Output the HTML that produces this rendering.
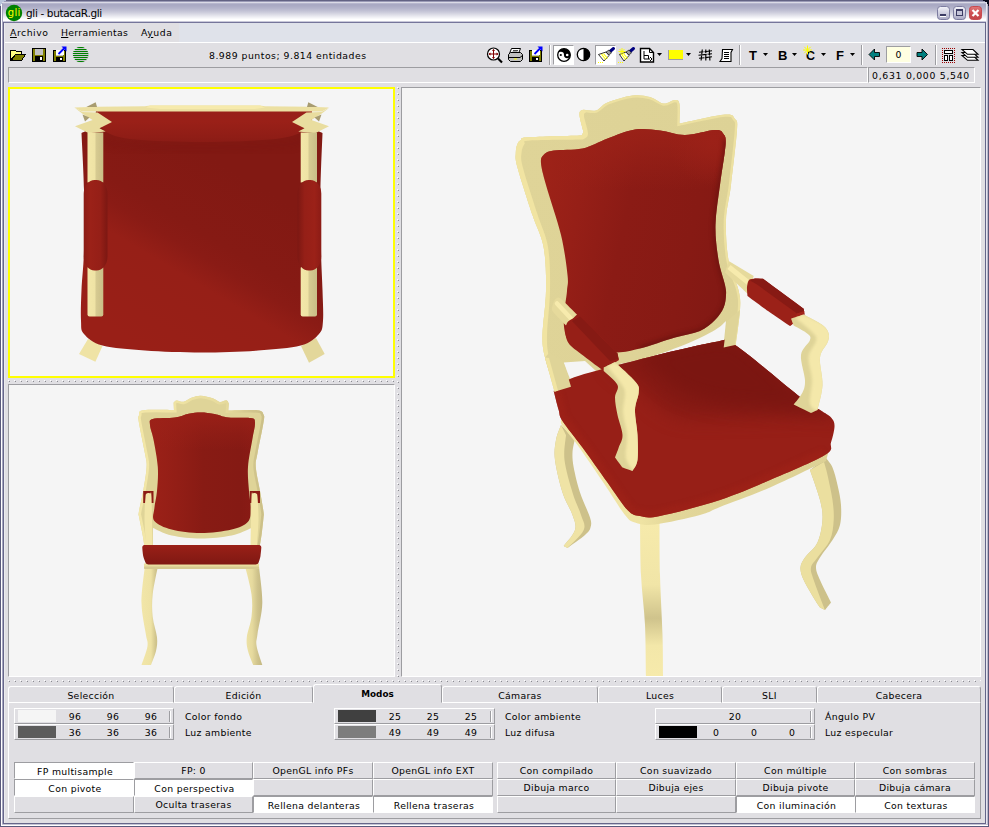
<!DOCTYPE html>
<html lang="es"><head><meta charset="utf-8"><title>gli - butacaR.gli</title>
<style>
html,body{margin:0;padding:0;background:#e0dfe3;}
body{width:989px;height:827px;overflow:hidden;}
#win{position:relative;width:989px;height:827px;background:#e0dfe3;overflow:hidden;font-family:"DejaVu Sans","Liberation Sans",sans-serif;font-size:9.3px;letter-spacing:0.32px;color:#000;}
#win div,#win span,#win svg{position:absolute;box-sizing:border-box;}
.t{white-space:nowrap;line-height:12px;height:12px;}
.c{text-align:center;}
/* frame */
#titlebar{left:0;top:0;width:989px;height:23px;background:linear-gradient(#626283 0.5px,#9a9ab6 1.5px,#dadae6 2.5px,#b6b6cd 3.5px,#a9a9c3 4.5px,#aaaac4 5.5px,#adadc6 6.5px,#b5b5cc 8.5px,#c0c0d3 10.5px,#cdcddc 12.5px,#dcdce6 14.5px,#ebebf1 16.5px,#f9f9fb 18.5px,#ffffff 19.5px,#ffffff 20.5px,#c9c9da 21.5px,#75759a 22.5px);}
.sunk{border:1px solid;border-color:#9d9da1 #fff #fff #9d9da1;}
.raise{border:1px solid;border-color:#fff #9d9da1 #9d9da1 #fff;}
.btn{height:17px;background:#e0dfe3;border:1px solid;border-color:#fff #9d9da1 #9d9da1 #fff;text-align:center;line-height:16px;white-space:nowrap;}
.btn.on{background:#fff;line-height:18px;padding-left:2px;border-color:#9d9da1 #fff #fff #9d9da1;}
.tab{top:686px;height:17px;border:1px solid;border-color:#fff #9d9da1 transparent #fff;border-radius:3px 3px 0 0;text-align:center;line-height:17px;}
.num{width:30px;text-align:center;line-height:12px;height:12px;}

</style></head>
<body>
<div id="win">
<div id="titlebar"></div>
<!-- window frame -->
<div style="left:0;top:0;width:1px;height:827px;background:#5a5a7c"></div>
<div style="left:1px;top:2px;width:1px;height:825px;background:#ffffff"></div>
<div style="left:2px;top:3px;width:1px;height:824px;background:#a6a6c0"></div>
<div style="left:3px;top:22px;width:1px;height:802px;background:#66668a"></div>
<div style="left:4px;top:23px;width:1px;height:800px;background:#ebebef"></div>
<div style="left:988px;top:0;width:1px;height:827px;background:#5a5a7c"></div>
<div style="left:987px;top:2px;width:1px;height:825px;background:#b8b8cc"></div>
<div style="left:986px;top:3px;width:1px;height:824px;background:#e8e8f0"></div>
<div style="left:985px;top:22px;width:1px;height:802px;background:#66668a"></div>
<div style="left:0;top:826px;width:989px;height:1px;background:#5a5a7c"></div>
<div style="left:1px;top:825px;width:987px;height:1px;background:#ffffff"></div>
<div style="left:2px;top:824px;width:985px;height:1px;background:#c4c4d4"></div>
<div style="left:3px;top:823px;width:983px;height:1px;background:#66668a"></div>
<!-- corners -->
<svg style="left:0;top:0" width="6" height="6"><path d="M0 0H6V1H4V2H2V4H1V6H0Z" fill="#b9c4dc"/></svg>
<svg style="left:983px;top:0" width="6" height="6"><path d="M0 0H6V6H5V4H4V2H2V1H0Z" fill="#0a0a1c"/></svg>
<!-- app icon -->
<svg style="left:5px;top:4px" width="18" height="18"><circle cx="9" cy="9" r="8.2" fill="#008000"/><text x="9.200" y="12.200" font-family="DejaVu Sans,Liberation Sans,sans-serif" font-size="10" fill="#ffff00" text-anchor="middle">gli</text></svg>
<div class="t" id="title" style="left:26px;top:7px;font-size:10.5px;letter-spacing:-0.35px;">gli - butacaR.gli</div>
<!-- caption buttons -->
<svg style="left:936px;top:5px" width="48" height="17">
 <defs><linearGradient id="cb" x1="0" y1="0" x2="0" y2="1"><stop offset="0" stop-color="#f4f4fa"/><stop offset="0.5" stop-color="#d0d0e0"/><stop offset="1" stop-color="#a8a8c4"/></linearGradient>
 <linearGradient id="cr" x1="0" y1="0" x2="0" y2="1"><stop offset="0" stop-color="#e0787a"/><stop offset="0.5" stop-color="#cf4f52"/><stop offset="1" stop-color="#c24448"/></linearGradient></defs>
 <rect x="1.5" y="1.5" width="12" height="13" rx="3" fill="url(#cb)" stroke="#7c7ca0"/>
 <rect x="4" y="9" width="6" height="2" fill="#3c3c64"/><rect x="4" y="11" width="6" height="1" fill="#fff"/>
 <rect x="17.500" y="1.500" width="12" height="13" rx="3" fill="url(#cb)" stroke="#7c7ca0"/>
 <rect x="20.500" y="4.500" width="6" height="6" fill="#c4c4d8" stroke="#3c3c64"/><rect x="20" y="4" width="7" height="2" fill="#3c3c64"/>
 <rect x="33.500" y="1.500" width="12" height="13" rx="3" fill="url(#cr)" stroke="#c84a50"/>
 <path d="M36.500 5 L42.500 11 M42.500 5 L36.500 11" stroke="#fff" stroke-width="2.200"/>
</svg>
<!-- menu -->
<div style="left:5px;top:23px;width:174px;height:19px;background:#e0dfe3"></div>
<div style="left:179px;top:23px;width:806px;height:19px;background:#dfe2ea"></div>
<div class="t" style="left:10px;top:27px;letter-spacing:0.53px"><u>A</u>rchivo</div>
<div class="t" style="left:61px;top:27px;"><u>H</u>erramientas</div>
<div class="t" style="left:141px;top:27px;letter-spacing:0.55px">A<u>y</u>uda</div>
<div style="left:5px;top:42px;width:980px;height:1px;background:#ffffff"></div>
<!-- toolbar -->
<div class="t" id="pts" style="left:209px;top:50px;letter-spacing:0.5px;">8.989 puntos; 9.814 entidades</div>
<!-- status bar -->
<div class="sunk" style="left:8px;top:67px;width:860px;height:16px;"></div>
<div class="sunk" style="left:868px;top:67px;width:107px;height:16px;"></div>
<div class="t" id="coords" style="left:872px;top:70px;letter-spacing:0.72px;">0,631 0,000 5,540</div>

<!-- toolbar pressed button backgrounds -->
<div style="left:553px;top:45px;width:21px;height:20px;background:#fff;border:1px solid;border-color:#9d9da1 #fff #fff #9d9da1"></div>
<div style="left:595px;top:45px;width:21px;height:20px;background:#fff;border:1px solid;border-color:#9d9da1 #fff #fff #9d9da1"></div>
<!-- separators -->
<div style="left:549px;top:45px;width:2px;height:20px;border-left:1px solid #9d9da1;border-right:1px solid #fff"></div>
<div style="left:739px;top:45px;width:2px;height:20px;border-left:1px solid #9d9da1;border-right:1px solid #fff"></div>
<div style="left:861px;top:45px;width:2px;height:20px;border-left:1px solid #9d9da1;border-right:1px solid #fff"></div>
<div style="left:935px;top:45px;width:2px;height:20px;border-left:1px solid #9d9da1;border-right:1px solid #fff"></div>
<!-- number box -->
<div style="left:886px;top:46px;width:25px;height:17px;background:#ffffe1;border:1px solid;border-color:#9d9da1 #fff #fff #9d9da1;text-align:center;line-height:15px;">0</div>
<svg style="left:0;top:43px" width="989" height="24" viewBox="0 43 989 24">
<defs>
 <g id="dd"><path d="M0 0h5L2.500 3z" fill="#000"/></g>
 <g id="floppy" shape-rendering="crispEdges">
  <path d="M0 0h13l1 1v13h-14z" fill="#000"/>
  <rect x="1" y="1" width="12" height="12" fill="#808000"/>
  <rect x="3" y="1" width="8" height="6" fill="#c0c0c0"/>
  <rect x="3" y="8" width="8" height="5" fill="#000"/>
  <rect x="8" y="9" width="2" height="3" fill="#fff"/>
 </g>
</defs>
<!-- open folder -->
<g shape-rendering="crispEdges">
 <path d="M10 50h5l1 1h6v3h4l-4 7h-12z" fill="#000"/>
 <path d="M11 51h4l1 1h5v2h-6l-4 5z" fill="#ffff80"/>
 <path d="M15.500 55h9l-3 5h-9z" fill="#808000"/>
</g>
<!-- save -->
<use href="#floppy" x="32" y="48"/>
<!-- save export -->
<g>
 <use href="#floppy" transform="translate(53 50) scale(0.929 0.857)"/>
 <rect x="56" y="50" width="8" height="5" fill="#fff" shape-rendering="crispEdges"/>
 <path d="M58.500 54L64 48.500" stroke="#0000ff" stroke-width="1.800"/>
 <path d="M61.500 46.500h5v5z" fill="#0000ff"/>
</g>
<!-- green sphere -->
<g>
 <circle cx="81.300" cy="55" r="7.600" fill="#c8c8cc"/>
 <clipPath id="sph"><circle cx="80.600" cy="54.500" r="7.800"/></clipPath>
 <g clip-path="url(#sph)" fill="#008000" shape-rendering="crispEdges">
  <rect x="72" y="47" width="18" height="1"/><rect x="72" y="49" width="18" height="1"/><rect x="72" y="51" width="18" height="1"/><rect x="72" y="53" width="18" height="1"/><rect x="72" y="55" width="18" height="1"/><rect x="72" y="57" width="18" height="1"/><rect x="72" y="59" width="18" height="1"/><rect x="72" y="61" width="18" height="1"/>
 </g>
</g>
<!-- zoom crosshair -->
<g>
 <path d="M498 58.500L502 62.500" stroke="#000" stroke-width="2.200"/>
 <circle cx="493.500" cy="54" r="6" fill="#fff" stroke="#000" stroke-width="1.200"/>
 <path d="M493.500 49.500v9M489 54h9" stroke="#800000" stroke-width="1"/>
 <path d="M492 51h3l-1.500-2zM492 57h3l-1.500 2zM490.500 52.500v3l-2-1.500zM496.500 52.500v3l2-1.500z" fill="#800000"/>
</g>
<!-- printer -->
<g stroke="#000" stroke-width="1" stroke-linejoin="round">
 <path d="M511.500 48.500h9l-2 5h-9z" fill="#fff"/>
 <path d="M508.500 54.500l2-2h10l2 2v5l-2 2h-10l-2-2z" fill="#c0c0c0"/>
 <path d="M508.500 57.500h11.500M520 57.500l2.500-2" fill="none"/>
 <path d="M513 50.500h5M512.500 52h5" stroke-width="0.700"/>
 <rect x="514" y="58.500" width="3" height="1" fill="#ffff00" stroke="none"/>
</g>
<!-- save export 2 -->
<g>
 <use href="#floppy" transform="translate(529 50) scale(0.929 0.857)"/>
 <rect x="532" y="50" width="8" height="5" fill="#fff" shape-rendering="crispEdges"/>
 <path d="M534.500 54L540 48.500" stroke="#0000ff" stroke-width="1.800"/>
 <path d="M537.500 46.500h5v5z" fill="#0000ff"/>
</g>
<!-- yin yang -->
<g>
 <circle cx="564" cy="55" r="6.300" fill="#fff" stroke="#000" stroke-width="1.300"/>
 <path d="M557.700 55a6.300 6.300 0 0 1 12.600 0a3.150 3.150 0 0 1-6.300 0a3.150 3.150 0 0 0-6.300 0z" fill="#000"/>
 <circle cx="560.800" cy="55" r="1.100" fill="#000"/><circle cx="567.200" cy="55" r="1.300" fill="#fff"/>
</g>
<!-- half circle -->
<g>
 <circle cx="583.500" cy="54.500" r="6.200" fill="#fff" stroke="#000" stroke-width="1.300"/>
 <path d="M583.500 48.300a6.200 6.200 0 0 1 0 12.400z" fill="#000"/>
</g>
<!-- brush 1 -->
<g id="brushA">
 <path d="M610 51.500L613.500 48.500" stroke="#000080" stroke-width="3" stroke-linecap="round"/>
 <path d="M606 52l3-2 2.500 3-3 2z" fill="#a0a0a4" stroke="#000" stroke-width="0.600"/>
 <path d="M598.500 54.500l7.500-2.500 3 3.500-5 5.500z" fill="#fff" stroke="#000" stroke-width="0.800"/>
 <path d="M603.500 53.500l4 5M601.500 54l4 5.500" stroke="#ffff00" stroke-width="1.200"/>
 <path d="M598 62.500h5.500" stroke="#ffff00" stroke-width="1" stroke-dasharray="1 1"/>
</g>
<!-- brush 2 -->
<g>
 <path d="M630 51.500L633.500 48.500" stroke="#000080" stroke-width="3" stroke-linecap="round"/>
 <path d="M626 52l3-2 2.500 3-3 2z" fill="#a0a0a4" stroke="#000" stroke-width="0.600"/>
 <path d="M619.500 54.500l6.500-2.500 3 3.500-5 5.500z" fill="#fff" stroke="#000" stroke-width="0.800"/>
 <path d="M623.500 53.500l4 5M621.500 54l4 5.500" stroke="#ffff00" stroke-width="1.200"/>
 <path d="M618 62.500h5.500" stroke="#ffff00" stroke-width="1" stroke-dasharray="1 1"/>
 <path d="M622 48v7M618.500 51.500h7M619.500 49l5 5M624.500 49l-5 5" stroke="#ffff00" stroke-width="0.900"/>
</g>
<!-- doc icon -->
<g>
 <path d="M640.500 48.500h9l4 4v9.500h-13z" fill="#fff" stroke="#000" stroke-width="1.400"/>
 <path d="M649.500 48.500v4h4" fill="none" stroke="#000" stroke-width="1"/>
 <path d="M644 51v8h6M644 55.500h4.500v3.500M650 57l2 2-2 2" fill="none" stroke="#000" stroke-width="1"/>
</g>
<use href="#dd" x="657" y="53"/>
<!-- yellow swatch -->
<rect x="668" y="50" width="15" height="10" fill="#9d9da1" shape-rendering="crispEdges"/>
<rect x="669" y="50" width="14" height="9" fill="#ffff00" shape-rendering="crispEdges"/>
<use href="#dd" x="686" y="53"/>
<!-- grid icon -->
<g stroke="#000" stroke-width="1.150" fill="none">
 <path d="M699 52.300l4.500-.5M704.500 51.700l7.500-.9M698.500 55.300l8-.9M707.500 54.300l4.500-.5M699 58.300l5.500-.6M705.500 57.600l6.500-.8"/>
 <path d="M702.300 49.500l-.6 5M701.600 55.500l-.5 5M705.800 49.500v3.500M705.800 54v6.500M709.300 49.500l.3 6M709.700 56.500l.2 4"/>
</g>
<!-- scroll doc -->
<g>
 <path d="M722.500 49.500h10l-1.500 3v9h-11l2-3z" fill="#fff" stroke="#000" stroke-width="1.100"/>
 <g shape-rendering="crispEdges" fill="#000"><rect x="724" y="52" width="5" height="1"/><rect x="724" y="54" width="5" height="1"/><rect x="724" y="56" width="5" height="1"/><rect x="724" y="58" width="5" height="1"/></g>
</g>
<!-- T B C F -->
<g font-family="'Liberation Sans',sans-serif" font-weight="bold" font-size="13" fill="#000">
 <text x="749" y="60">T</text>
 <text x="778" y="60">B</text>
 <text x="806" y="60.300" font-size="12.500">C</text>
 <text x="836" y="60">F</text>
</g>
<path d="M807.500 45.500v9M803 50h9M804.300 46.800l6.400 6.400M810.700 46.800l-6.400 6.400" stroke="#ffff00" stroke-width="1"/>
<use href="#dd" x="763" y="53"/><use href="#dd" x="792" y="53"/><use href="#dd" x="821" y="53"/><use href="#dd" x="850" y="53"/>
<!-- arrows -->
<path d="M869 54.500l5.500-5.500v3.500h5v4h-5v3.500z" fill="#008080" stroke="#000" stroke-width="0.900"/>
<path d="M927.500 54.500l-5.500-5.500v3.500h-5v4h5v3.500z" fill="#008080" stroke="#000" stroke-width="0.900"/>
<!-- dotted icon -->
<g shape-rendering="crispEdges">
 <g fill="#9a0000"><rect x="942" y="48" width="1" height="1"/><rect x="942" y="62" width="1" height="1"/><rect x="944" y="48" width="1" height="1"/><rect x="944" y="62" width="1" height="1"/><rect x="946" y="48" width="1" height="1"/><rect x="946" y="62" width="1" height="1"/><rect x="948" y="48" width="1" height="1"/><rect x="948" y="62" width="1" height="1"/><rect x="950" y="48" width="1" height="1"/><rect x="950" y="62" width="1" height="1"/><rect x="952" y="48" width="1" height="1"/><rect x="952" y="62" width="1" height="1"/><rect x="954" y="48" width="1" height="1"/><rect x="954" y="62" width="1" height="1"/><rect x="942" y="50" width="1" height="1"/><rect x="954" y="50" width="1" height="1"/><rect x="942" y="52" width="1" height="1"/><rect x="954" y="52" width="1" height="1"/><rect x="942" y="54" width="1" height="1"/><rect x="954" y="54" width="1" height="1"/><rect x="942" y="56" width="1" height="1"/><rect x="954" y="56" width="1" height="1"/><rect x="942" y="58" width="1" height="1"/><rect x="954" y="58" width="1" height="1"/><rect x="942" y="60" width="1" height="1"/><rect x="954" y="60" width="1" height="1"/></g>
 <rect x="944.500" y="50.500" width="8" height="3" fill="#fff" stroke="#000" stroke-width="1"/>
 <rect x="944.500" y="55.500" width="3" height="5" fill="#fff" stroke="#000" stroke-width="1"/>
 <rect x="949.500" y="55.500" width="3" height="5" fill="#fff" stroke="#000" stroke-width="1"/>
</g>
<!-- layers icon -->
<g fill="#fff" stroke="#000" stroke-width="1.100" stroke-linejoin="miter">
 <path d="M962 55.500h11l5 4.800h-10.500z"/>
 <path d="M962 52.500h11l5 4.800h-10.500z"/>
 <path d="M962 49.500h11l5 4.800h-10.500z"/>
</g>
</svg>

<!-- viewports -->
<div style="left:8px;top:87px;width:387px;height:291px;background:#f5f5f5;border:2px solid #ffff00;"></div>
<div style="left:8px;top:384px;width:387px;height:293px;background:#f5f5f5;border:1px solid;border-color:#9d9da1 #fff #fff #9d9da1;"></div>
<div style="left:401px;top:87px;width:580px;height:590px;background:#f5f5f5;border:1px solid;border-color:#9d9da1 #fff #fff #9d9da1;"></div>

<svg style="left:10px;top:89px" width="383" height="287" viewBox="10 89 383 287">
<defs>
<linearGradient id="c1seat" gradientUnits="userSpaceOnUse" x1="255" y1="183" x2="153" y2="355">
 <stop offset="0" stop-color="#821913"/><stop offset="0.35" stop-color="#861a14"/><stop offset="0.45" stop-color="#8a1b15"/><stop offset="0.58" stop-color="#961f17"/><stop offset="1" stop-color="#991f17"/></linearGradient>
<linearGradient id="c1band" gradientUnits="userSpaceOnUse" x1="0" y1="111" x2="0" y2="146">
 <stop offset="0" stop-color="#98201a"/><stop offset="0.3" stop-color="#9a2018"/><stop offset="0.75" stop-color="#8f1d16"/><stop offset="1" stop-color="#861a14"/></linearGradient>
<linearGradient id="c1post" gradientUnits="userSpaceOnUse" x1="87" y1="0" x2="104" y2="0">
 <stop offset="0" stop-color="#f3e7a9"/><stop offset="0.45" stop-color="#efe3a5"/><stop offset="0.55" stop-color="#d6ca91"/><stop offset="1" stop-color="#c9bd86"/></linearGradient>
<linearGradient id="c1postR" gradientUnits="userSpaceOnUse" x1="300" y1="0" x2="317" y2="0">
 <stop offset="0" stop-color="#f3e7a9"/><stop offset="0.45" stop-color="#efe3a5"/><stop offset="0.55" stop-color="#d6ca91"/><stop offset="1" stop-color="#c9bd86"/></linearGradient>
<linearGradient id="c1pad" gradientUnits="userSpaceOnUse" x1="83" y1="0" x2="108" y2="0">
 <stop offset="0" stop-color="#8a1b15"/><stop offset="0.3" stop-color="#9b2118"/><stop offset="0.7" stop-color="#951f17"/><stop offset="1" stop-color="#7a1712"/></linearGradient>
<linearGradient id="c1padR" gradientUnits="userSpaceOnUse" x1="297" y1="0" x2="322" y2="0">
 <stop offset="0" stop-color="#7a1712"/><stop offset="0.3" stop-color="#951f17"/><stop offset="0.7" stop-color="#9b2118"/><stop offset="1" stop-color="#8a1b15"/></linearGradient>
<filter id="c1blur" color-interpolation-filters="sRGB" x="-20%" y="-20%" width="140%" height="140%"><feGaussianBlur stdDeviation="3"/></filter>
</defs>
<path d="M88.0 339.0L79.0 354.0L95.4 361.8L102.5 346.0Z" fill="#efe3a5"/>
<path d="M316.0 338.0L324.7 354.0L309.0 362.7L301.0 346.0Z" fill="#e3d79b"/>
<clipPath id="c1clip"><path d="M96.0 111.0C131.3 111.0 272.7 111.0 308.0 111.0C308.5 113.8 310.5 125.2 311.0 128.0C312.9 128.8 320.6 132.2 322.5 133.0C322.2 142.5 320.8 170.5 320.5 190.0C320.2 209.5 320.7 233.3 321.0 250.0C321.3 266.7 322.2 278.2 322.5 290.0C322.8 301.8 323.6 313.5 323.0 320.8C322.4 328.1 322.7 329.9 319.0 334.0C315.3 338.1 310.9 342.8 300.7 345.5C290.5 348.2 274.5 349.3 258.0 350.5C241.5 351.7 220.3 352.5 201.5 352.5C182.7 352.5 161.5 351.7 145.0 350.5C128.5 349.3 112.7 348.2 102.5 345.5C92.3 342.8 87.6 338.1 84.0 334.0C80.4 329.9 81.4 328.1 81.0 320.8C80.6 313.5 81.0 301.8 81.5 290.0C82.0 278.2 83.6 266.7 84.0 250.0C84.4 233.3 84.4 209.5 84.0 190.0C83.6 170.5 81.9 142.5 81.5 133.0C83.4 132.2 91.1 128.8 93.0 128.0C93.5 125.2 95.5 113.8 96.0 111.0Z"/></clipPath>
<path d="M96.0 111.0C131.3 111.0 272.7 111.0 308.0 111.0C308.5 113.8 310.5 125.2 311.0 128.0C312.9 128.8 320.6 132.2 322.5 133.0C322.2 142.5 320.8 170.5 320.5 190.0C320.2 209.5 320.7 233.3 321.0 250.0C321.3 266.7 322.2 278.2 322.5 290.0C322.8 301.8 323.6 313.5 323.0 320.8C322.4 328.1 322.7 329.9 319.0 334.0C315.3 338.1 310.9 342.8 300.7 345.5C290.5 348.2 274.5 349.3 258.0 350.5C241.5 351.7 220.3 352.5 201.5 352.5C182.7 352.5 161.5 351.7 145.0 350.5C128.5 349.3 112.7 348.2 102.5 345.5C92.3 342.8 87.6 338.1 84.0 334.0C80.4 329.9 81.4 328.1 81.0 320.8C80.6 313.5 81.0 301.8 81.5 290.0C82.0 278.2 83.6 266.7 84.0 250.0C84.4 233.3 84.4 209.5 84.0 190.0C83.6 170.5 81.9 142.5 81.5 133.0C83.4 132.2 91.1 128.8 93.0 128.0C93.5 125.2 95.5 113.8 96.0 111.0Z" fill="url(#c1seat)"/>
<g clip-path="url(#c1clip)"><path d="M86.0 120.0C88.3 123.3 91.8 135.7 100.0 140.0C108.2 144.3 118.2 144.7 135.0 146.0C151.8 147.3 178.5 148.0 201.0 148.0C223.5 148.0 252.8 147.3 270.0 146.0C287.2 144.7 296.0 144.3 304.0 140.0C312.0 135.7 315.7 123.3 318.0 120.0" fill="none" stroke="#7a1611" stroke-width="6" filter="url(#c1blur)" opacity="0.4"/></g>
<path d="M97.0 111.0C132.8 111.0 276.2 111.0 312.0 111.0C311.8 112.8 313.0 118.3 311.0 122.0C309.0 125.7 306.8 130.1 300.0 133.0C293.2 135.9 286.5 138.0 270.0 139.5C253.5 141.0 223.5 142.0 201.0 142.0C178.5 142.0 150.5 141.0 135.0 139.5C119.5 138.0 114.0 135.9 108.0 133.0C102.0 130.1 100.8 125.7 99.0 122.0C97.2 118.3 97.3 112.8 97.0 111.0Z" fill="url(#c1band)"/>
<path d="M74.4 107.5L97.0 106.8L145.0 106.3L150.0 105.6L260.0 105.6L265.0 106.3L310.0 106.8L329.0 107.5L322.0 111.6L82.0 111.6Z" fill="#ece0a2"/>
<path d="M150.0 105.6L260.0 105.6L265.0 107.5L255.0 109.0L160.0 109.0L146.0 107.5Z" fill="#f6eaac"/>
<path d="M86.3 107.0L95.7 102.3L97.0 107.0Z" fill="#a89c70"/>
<path d="M74.4 107.5L82.5 112.0L97.6 112.5L112.0 122.0L99.5 128.2L105.7 131.4L88.8 133.2L75.0 126.3L92.6 120.0L82.5 113.8Z" fill="#e9dd9f"/>
<path d="M82.5 114.5L89.5 117.5L85.0 121.5Z" fill="#a89c70"/>
<path d="M317.7 107.0L308.3 102.3L307.0 107.0Z" fill="#a89c70"/>
<path d="M329.6 107.5L321.5 112.0L306.4 112.5L292.0 122.0L304.5 128.2L298.3 131.4L315.2 133.2L329.0 126.3L311.4 120.0L321.5 113.8Z" fill="#e9dd9f"/>
<path d="M321.5 114.5L314.5 117.5L319.0 121.5Z" fill="#a89c70"/>
<rect x="87.5" y="132.5" width="15.8" height="50" fill="url(#c1post)"/>
<rect x="87.5" y="266" width="15.8" height="50.500" rx="2" fill="url(#c1post)"/>
<rect x="300.700" y="132.500" width="16.300" height="50" fill="url(#c1postR)"/>
<rect x="300.700" y="266" width="16.300" height="50.500" rx="2" fill="url(#c1postR)"/>
<rect x="83.700" y="180" width="23.800" height="90.500" rx="11" ry="14" fill="url(#c1pad)"/>
<rect x="297.500" y="180" width="23.800" height="90.500" rx="11" ry="14" fill="url(#c1padR)"/>
</svg>

<svg style="left:9px;top:385px" width="385" height="291" viewBox="9 385 385 291">
<defs>
<linearGradient id="c2back" gradientUnits="userSpaceOnUse" x1="150" y1="0" x2="256" y2="0">
 <stop offset="0" stop-color="#9c2118"/><stop offset="0.25" stop-color="#931e16"/><stop offset="0.5" stop-color="#881b14"/><stop offset="0.85" stop-color="#851a14"/><stop offset="1" stop-color="#8a1b15"/></linearGradient>
<linearGradient id="c2top" gradientUnits="userSpaceOnUse" x1="0" y1="412" x2="0" y2="450">
 <stop offset="0" stop-color="#9c2118" stop-opacity="0.9"/><stop offset="0.6" stop-color="#9c2118" stop-opacity="0.3"/><stop offset="1" stop-color="#9c2118" stop-opacity="0"/></linearGradient>
<linearGradient id="c2seat" gradientUnits="userSpaceOnUse" x1="0" y1="545" x2="0" y2="565">
 <stop offset="0" stop-color="#9a2017"/><stop offset="0.5" stop-color="#8c1c15"/><stop offset="1" stop-color="#7f1813"/></linearGradient>
<linearGradient id="c2legL" gradientUnits="userSpaceOnUse" x1="141" y1="0" x2="159" y2="0">
 <stop offset="0" stop-color="#f2e6a8"/><stop offset="0.55" stop-color="#eee2a4"/><stop offset="0.8" stop-color="#d2c68e"/><stop offset="1" stop-color="#c8bc86"/></linearGradient>
<linearGradient id="c2legR" gradientUnits="userSpaceOnUse" x1="245" y1="0" x2="263" y2="0">
 <stop offset="0" stop-color="#efe3a5"/><stop offset="0.4" stop-color="#e6da9e"/><stop offset="0.7" stop-color="#cfc38c"/><stop offset="1" stop-color="#c2b680"/></linearGradient>
<linearGradient id="c2bev" gradientUnits="userSpaceOnUse" x1="138" y1="0" x2="264" y2="0">
 <stop offset="0" stop-color="#f3e7a7"/><stop offset="0.3" stop-color="#efe3a3"/><stop offset="0.7" stop-color="#e6da9c"/><stop offset="0.9" stop-color="#d2c68d"/><stop offset="1" stop-color="#cbbf87"/></linearGradient>
</defs>
<path d="M144.9 566.0C144.3 572.2 141.3 591.7 141.5 603.0C141.7 614.3 144.8 626.8 145.8 634.0C146.8 641.2 148.2 640.8 147.5 646.0C146.8 651.2 142.5 661.8 141.5 665.0C143.1 665.0 149.4 665.0 151.0 665.0C151.8 662.7 155.0 655.6 156.0 651.0C157.0 646.4 157.6 643.0 157.0 637.3C156.4 631.6 153.4 623.9 152.7 616.7C152.0 609.6 151.8 602.9 152.7 594.4C153.6 585.9 157.1 570.7 158.0 566.0C155.8 566.0 147.1 566.0 144.9 566.0Z" fill="url(#c2legL)"/>
<path d="M258.9 566.0C259.5 572.2 262.5 591.7 262.3 603.0C262.1 614.3 258.4 626.8 257.5 634.0C256.6 641.2 255.8 640.8 256.6 646.0C257.4 651.2 261.4 661.8 262.3 665.0C260.8 665.0 254.7 665.0 253.2 665.0C252.3 662.7 249.1 655.6 248.0 651.0C246.9 646.4 246.2 643.0 246.8 637.3C247.4 631.6 250.7 623.9 251.5 616.7C252.3 609.6 252.6 602.9 251.5 594.4C250.4 585.9 246.1 570.7 245.0 566.0C247.3 566.0 256.6 566.0 258.9 566.0Z" fill="url(#c2legR)"/>
<path d="M138.9 415.5C139.6 413.5 137.3 411.2 143.2 410.3C149.0 409.4 168.9 410.1 174.0 410.0C173.9 408.8 173.7 403.8 173.6 402.6C174.1 402.2 175.0 400.5 176.7 400.4C178.4 400.2 181.0 402.2 183.6 401.7C186.2 401.2 189.1 398.5 192.0 397.5C194.9 396.5 197.3 395.6 200.8 395.7C204.3 395.8 209.7 397.2 212.8 398.3C216.0 399.4 217.4 401.6 219.7 402.0C222.0 402.4 225.1 400.1 226.6 400.4C228.1 400.6 228.4 403.0 228.8 403.5C228.7 404.7 228.4 409.3 228.3 410.5C233.2 410.5 251.6 409.6 257.5 410.3C263.4 411.0 262.5 412.6 263.5 414.6C264.5 416.6 264.5 415.9 263.5 422.4C262.5 428.8 258.8 445.9 257.5 453.3C256.2 460.7 255.4 460.7 255.8 467.0C256.2 473.3 258.7 483.6 260.0 491.0C261.3 498.4 262.9 507.3 263.5 511.7C264.1 516.1 263.8 514.0 263.5 517.5C263.2 521.0 262.5 527.6 261.8 533.0C261.1 538.4 259.6 547.2 259.2 550.0C240.2 550.0 164.0 550.0 145.0 550.0C144.6 547.2 143.3 538.4 142.3 533.0C141.3 527.6 139.8 521.0 139.2 517.5C138.6 514.0 138.2 516.1 138.9 511.7C139.6 507.3 141.9 498.4 143.2 491.0C144.5 483.6 146.3 473.3 146.6 467.0C146.9 460.7 146.2 460.7 144.9 453.3C143.6 445.9 139.9 428.7 138.9 422.4C137.9 416.1 138.2 417.5 138.9 415.5Z" fill="#dfd498"/>
<clipPath id="c2fclip"><path d="M138.9 415.5C139.6 413.5 137.3 411.2 143.2 410.3C149.0 409.4 168.9 410.1 174.0 410.0C173.9 408.8 173.7 403.8 173.6 402.6C174.1 402.2 175.0 400.5 176.7 400.4C178.4 400.2 181.0 402.2 183.6 401.7C186.2 401.2 189.1 398.5 192.0 397.5C194.9 396.5 197.3 395.6 200.8 395.7C204.3 395.8 209.7 397.2 212.8 398.3C216.0 399.4 217.4 401.6 219.7 402.0C222.0 402.4 225.1 400.1 226.6 400.4C228.1 400.6 228.4 403.0 228.8 403.5C228.7 404.7 228.4 409.3 228.3 410.5C233.2 410.5 251.6 409.6 257.5 410.3C263.4 411.0 262.5 412.6 263.5 414.6C264.5 416.6 264.5 415.9 263.5 422.4C262.5 428.8 258.8 445.9 257.5 453.3C256.2 460.7 255.4 460.7 255.8 467.0C256.2 473.3 258.7 483.6 260.0 491.0C261.3 498.4 262.9 507.3 263.5 511.7C264.1 516.1 263.8 514.0 263.5 517.5C263.2 521.0 262.5 527.6 261.8 533.0C261.1 538.4 259.6 547.2 259.2 550.0C240.2 550.0 164.0 550.0 145.0 550.0C144.6 547.2 143.3 538.4 142.3 533.0C141.3 527.6 139.8 521.0 139.2 517.5C138.6 514.0 138.2 516.1 138.9 511.7C139.6 507.3 141.9 498.4 143.2 491.0C144.5 483.6 146.3 473.3 146.6 467.0C146.9 460.7 146.2 460.7 144.9 453.3C143.6 445.9 139.9 428.7 138.9 422.4C137.9 416.1 138.2 417.5 138.9 415.5Z"/></clipPath>
<g clip-path="url(#c2fclip)"><path d="M138.9 415.5C139.6 413.5 137.3 411.2 143.2 410.3C149.0 409.4 168.9 410.1 174.0 410.0C173.9 408.8 173.7 403.8 173.6 402.6C174.1 402.2 175.0 400.5 176.7 400.4C178.4 400.2 181.0 402.2 183.6 401.7C186.2 401.2 189.1 398.5 192.0 397.5C194.9 396.5 197.3 395.6 200.8 395.7C204.3 395.8 209.7 397.2 212.8 398.3C216.0 399.4 217.4 401.6 219.7 402.0C222.0 402.4 225.1 400.1 226.6 400.4C228.1 400.6 228.4 403.0 228.8 403.5C228.7 404.7 228.4 409.3 228.3 410.5C233.2 410.5 251.6 409.6 257.5 410.3C263.4 411.0 262.5 412.6 263.5 414.6C264.5 416.6 264.5 415.9 263.5 422.4C262.5 428.8 258.8 445.9 257.5 453.3C256.2 460.7 255.4 460.7 255.8 467.0C256.2 473.3 258.7 483.6 260.0 491.0C261.3 498.4 262.9 507.3 263.5 511.7C264.1 516.1 263.8 514.0 263.5 517.5C263.2 521.0 262.5 527.6 261.8 533.0C261.1 538.4 259.6 547.2 259.2 550.0C240.2 550.0 164.0 550.0 145.0 550.0C144.6 547.2 143.3 538.4 142.3 533.0C141.3 527.6 139.8 521.0 139.2 517.5C138.6 514.0 138.2 516.1 138.9 511.7C139.6 507.3 141.9 498.4 143.2 491.0C144.5 483.6 146.3 473.3 146.6 467.0C146.9 460.7 146.2 460.7 144.9 453.3C143.6 445.9 139.9 428.7 138.9 422.4C137.9 416.1 138.2 417.5 138.9 415.5Z" fill="none" stroke="url(#c2bev)" stroke-width="5"/></g>
<path d="M153.0 545.0C153.0 542.2 153.0 530.8 153.0 528.0C156.1 529.2 163.6 533.8 171.6 535.5C179.6 537.2 190.8 538.5 200.8 538.5C210.8 538.5 223.2 537.2 231.7 535.5C240.1 533.8 248.2 529.2 251.5 528.0C251.5 530.8 251.5 542.2 251.5 545.0C235.1 545.0 169.4 545.0 153.0 545.0Z" fill="#f5f5f5"/>
<path d="M150.0 425.0C149.9 421.6 148.5 420.2 152.7 419.0C156.9 417.8 169.0 418.5 175.0 417.6C181.0 416.7 184.4 414.7 188.7 413.8C193.0 412.9 196.5 412.4 200.8 412.4C205.1 412.4 209.9 413.1 214.5 414.0C219.1 414.9 222.3 416.9 228.3 417.6C234.3 418.3 246.2 417.2 250.6 418.0C255.0 418.8 254.7 418.8 255.0 422.4C255.3 426.0 253.5 432.1 252.3 439.5C251.1 446.9 248.6 458.4 248.0 467.0C247.4 475.6 248.6 484.2 249.0 491.0C249.4 497.8 250.8 502.9 250.6 508.0C250.4 513.1 251.2 518.2 248.0 521.8C244.8 525.4 239.6 527.6 231.7 529.5C223.8 531.4 210.8 533.0 200.8 533.0C190.8 533.0 179.3 531.5 171.6 529.5C163.9 527.5 157.3 524.6 154.4 521.0C151.5 517.4 154.0 513.0 154.4 508.0C154.8 503.0 156.4 497.8 157.0 491.0C157.6 484.2 158.4 475.6 157.8 467.0C157.2 458.4 154.8 446.5 153.5 439.5C152.2 432.5 150.1 428.4 150.0 425.0Z" fill="url(#c2back)"/>
<path d="M150.0 425.0C149.9 421.6 148.5 420.2 152.7 419.0C156.9 417.8 169.0 418.5 175.0 417.6C181.0 416.7 184.4 414.7 188.7 413.8C193.0 412.9 196.5 412.4 200.8 412.4C205.1 412.4 209.9 413.1 214.5 414.0C219.1 414.9 222.3 416.9 228.3 417.6C234.3 418.3 246.2 417.2 250.6 418.0C255.0 418.8 254.7 418.8 255.0 422.4C255.3 426.0 253.5 432.1 252.3 439.5C251.1 446.9 248.6 458.4 248.0 467.0C247.4 475.6 248.6 484.2 249.0 491.0C249.4 497.8 250.8 502.9 250.6 508.0C250.4 513.1 251.2 518.2 248.0 521.8C244.8 525.4 239.6 527.6 231.7 529.5C223.8 531.4 210.8 533.0 200.8 533.0C190.8 533.0 179.3 531.5 171.6 529.5C163.9 527.5 157.3 524.6 154.4 521.0C151.5 517.4 154.0 513.0 154.4 508.0C154.8 503.0 156.4 497.8 157.0 491.0C157.6 484.2 158.4 475.6 157.8 467.0C157.2 458.4 154.8 446.5 153.5 439.5C152.2 432.5 150.1 428.4 150.0 425.0Z" fill="url(#c2top)"/>
<path d="M143.2 491.0L153.5 491.0L153.5 503.0L143.2 503.0Z" fill="#8c1c15"/>
<path d="M249.8 491.0L260.0 491.0L260.0 503.0L249.8 503.0Z" fill="#8c1c15"/>
<path d="M145.5 497.0C145.9 492.6 146.2 494.1 147.0 493.5C147.8 492.9 149.2 492.9 150.0 493.5C150.8 494.1 151.1 488.4 151.5 497.0C151.9 505.6 152.3 537.0 152.5 545.0C151.4 545.0 147.1 545.0 146.0 545.0C145.8 540.8 144.6 528.0 144.5 520.0C144.4 512.0 145.1 501.4 145.5 497.0Z" fill="#f2e6a8"/>
<path d="M251.5 497.0C251.9 488.4 252.2 494.1 253.0 493.5C253.8 492.9 255.2 492.9 256.0 493.5C256.8 494.1 257.1 492.6 257.5 497.0C257.9 501.4 258.6 512.0 258.5 520.0C258.4 528.0 257.2 540.8 257.0 545.0C255.9 545.0 251.6 545.0 250.5 545.0C250.7 537.0 251.1 505.6 251.5 497.0Z" fill="#f2e6a8"/>
<rect x="144" y="563" width="115" height="6" rx="1.500" fill="#e9dd9f"/>
<rect x="144" y="566.500" width="115" height="2.500" rx="1" fill="#d6ca91"/>
<path d="M142.3 547.0C142.4 545.7 143.8 545.2 144.0 545.0C157.5 545.0 246.0 545.0 259.5 545.0C259.7 545.2 261.2 545.7 261.3 547.0C261.4 548.3 260.8 554.1 260.5 556.0C260.2 557.9 258.9 562.0 258.4 563.0C257.9 564.0 256.3 564.3 256.0 564.5C243.4 564.5 160.6 564.5 148.0 564.5C147.7 564.3 146.4 564.0 145.8 563.0C145.2 562.0 143.6 557.9 143.2 556.0C142.8 554.1 142.2 548.3 142.3 547.0Z" fill="url(#c2seat)"/>
</svg>

<svg style="left:402px;top:88px" width="578" height="588" viewBox="402 88 578 588">
<defs>
<linearGradient id="c3back" gradientUnits="userSpaceOnUse" x1="540" y1="200" x2="730" y2="240">
 <stop offset="0" stop-color="#9d2218"/><stop offset="0.2" stop-color="#961f17"/><stop offset="0.45" stop-color="#8b1b15"/><stop offset="0.8" stop-color="#871a14"/><stop offset="1" stop-color="#831914"/></linearGradient>
<linearGradient id="c3backtop" gradientUnits="userSpaceOnUse" x1="0" y1="128" x2="0" y2="190">
 <stop offset="0" stop-color="#9c2218" stop-opacity="0.9"/><stop offset="0.6" stop-color="#9c2218" stop-opacity="0.35"/><stop offset="1" stop-color="#9c2218" stop-opacity="0"/></linearGradient>
<linearGradient id="c3seat" gradientUnits="userSpaceOnUse" x1="715" y1="345" x2="668" y2="480">
 <stop offset="0" stop-color="#7d1712"/><stop offset="0.42" stop-color="#831913"/><stop offset="0.62" stop-color="#921e16"/><stop offset="1" stop-color="#9a2017"/></linearGradient>
<linearGradient id="c3leg" gradientUnits="userSpaceOnUse" x1="0" y1="524" x2="0" y2="676">
 <stop offset="0" stop-color="#f6eaab"/><stop offset="0.4" stop-color="#f1e5a7"/><stop offset="0.62" stop-color="#cfc38c"/><stop offset="0.8" stop-color="#f3e7a9"/><stop offset="1" stop-color="#f6eaab"/></linearGradient>
<linearGradient id="c3frame" gradientUnits="userSpaceOnUse" x1="515" y1="0" x2="740" y2="0">
 <stop offset="0" stop-color="#dfd498"/><stop offset="1" stop-color="#ddd296"/></linearGradient>
<filter id="c3blur" color-interpolation-filters="sRGB" x="-20%" y="-20%" width="140%" height="140%"><feGaussianBlur stdDeviation="11"/></filter>
<filter id="c3blur2" color-interpolation-filters="sRGB" x="-20%" y="-20%" width="140%" height="140%"><feGaussianBlur stdDeviation="2"/></filter>
<radialGradient id="c3backtr" gradientUnits="userSpaceOnUse" cx="712" cy="140" r="45">
 <stop offset="0" stop-color="#9c2118" stop-opacity="0.9"/><stop offset="0.5" stop-color="#9c2118" stop-opacity="0.4"/><stop offset="1" stop-color="#9c2118" stop-opacity="0"/></radialGradient>
<linearGradient id="c3rail" gradientUnits="userSpaceOnUse" x1="560" y1="0" x2="830" y2="0">
 <stop offset="0" stop-color="#f1e5a5"/><stop offset="0.3" stop-color="#efe3a3"/><stop offset="0.42" stop-color="#e2d699"/><stop offset="1" stop-color="#ddd195"/></linearGradient>
<filter id="c3blur3" color-interpolation-filters="sRGB" x="-20%" y="-20%" width="140%" height="140%"><feGaussianBlur stdDeviation="6"/></filter>
<filter id="c3blur4" color-interpolation-filters="sRGB" x="-30%" y="-30%" width="160%" height="160%"><feGaussianBlur stdDeviation="9"/></filter>
<filter id="c3blur1" color-interpolation-filters="sRGB" x="-30%" y="-30%" width="160%" height="160%"><feGaussianBlur stdDeviation="1.500"/></filter>
</defs>
<path d="M561.0 425.0C560.2 427.5 557.0 434.2 556.0 440.0C555.0 445.8 553.9 451.2 555.0 460.0C556.1 468.8 559.6 483.3 562.5 492.5C565.4 501.7 570.4 508.8 572.5 515.0C574.6 521.2 576.5 524.8 575.0 530.0C573.5 535.2 565.6 543.3 563.7 546.0C564.3 546.3 566.9 547.7 567.5 548.0C570.4 545.8 581.2 538.4 585.0 535.0C588.8 531.6 589.7 530.4 590.5 527.5C591.3 524.6 591.8 523.3 590.0 517.5C588.2 511.7 582.7 500.8 580.0 492.5C577.3 484.2 575.0 474.2 573.7 467.5C572.5 460.8 572.3 457.3 572.5 452.5C572.7 447.7 574.6 441.0 575.0 438.7C572.7 436.4 563.3 427.3 561.0 425.0Z" fill="#cdc18a"/>
<path d="M561.0 425.0C560.2 427.5 557.0 434.2 556.0 440.0C555.0 445.8 553.9 451.2 555.0 460.0C556.1 468.8 559.6 483.3 562.5 492.5C565.4 501.7 570.4 508.8 572.5 515.0C574.6 521.2 576.5 524.8 575.0 530.0C573.5 535.2 565.6 543.3 563.7 546.0C564.3 546.3 566.9 547.7 567.5 548.0C570.2 545.0 581.5 535.5 583.7 530.0C586.0 524.5 582.9 521.2 581.0 515.0C579.1 508.8 575.2 501.7 572.5 492.5C569.8 483.3 565.6 469.6 564.5 460.0C563.4 450.4 565.8 439.2 566.0 435.0C565.2 433.3 561.8 426.7 561.0 425.0Z" fill="#efe3a5"/>
<path d="M810.0 470.0C811.7 475.0 817.9 491.7 820.0 500.0C822.1 508.3 822.9 512.9 822.5 520.0C822.1 527.1 820.4 536.2 817.5 542.5C814.6 548.8 807.8 553.3 805.0 557.5C802.2 561.7 800.7 563.8 800.5 567.5C800.3 571.2 801.3 574.6 803.7 580.0C806.1 585.4 812.3 595.4 815.0 600.0C817.7 604.6 819.2 606.2 820.0 607.5C820.8 607.9 824.2 609.6 825.0 610.0C826.0 608.8 830.0 603.8 831.0 602.5C829.2 598.8 822.5 585.8 820.0 580.0C817.5 574.2 816.0 571.2 816.0 567.5C816.0 563.8 817.2 562.1 820.0 557.5C822.8 552.9 829.2 545.4 832.5 540.0C835.8 534.6 838.6 530.8 840.0 525.0C841.4 519.2 841.4 511.7 841.0 505.0C840.6 498.3 838.9 491.2 837.5 485.0C836.1 478.8 834.4 472.0 832.5 467.5C830.6 463.0 827.1 459.6 826.0 458.0C823.3 460.0 812.7 468.0 810.0 470.0Z" fill="#cdc18a"/>
<path d="M810.0 470.0C811.7 475.0 817.9 491.7 820.0 500.0C822.1 508.3 822.9 512.9 822.5 520.0C822.1 527.1 820.4 536.2 817.5 542.5C814.6 548.8 807.8 553.3 805.0 557.5C802.2 561.7 800.7 563.8 800.5 567.5C800.3 571.2 801.3 574.6 803.7 580.0C806.1 585.4 812.3 595.4 815.0 600.0C817.7 604.6 819.2 606.2 820.0 607.5C820.8 607.9 824.2 609.6 825.0 610.0C823.1 605.0 816.0 587.1 813.7 580.0C811.4 572.9 810.4 571.2 811.0 567.5C811.6 563.8 814.3 562.1 817.5 557.5C820.7 552.9 827.3 546.2 830.0 540.0C832.7 533.8 833.3 526.7 833.7 520.0C834.1 513.3 833.5 507.5 832.5 500.0C831.5 492.5 828.9 481.3 827.5 475.0C826.1 468.7 824.6 464.2 824.0 462.0C821.7 463.3 812.3 468.7 810.0 470.0Z" fill="#ebdf9f"/>
<path d="M640.0 520.0C640.2 529.2 640.2 557.5 641.0 575.0C641.8 592.5 644.2 608.2 645.0 625.0C645.8 641.8 645.8 667.5 646.0 676.0C648.8 676.0 660.2 676.0 663.0 676.0C662.9 669.2 663.0 651.8 662.5 635.0C662.0 618.2 660.5 594.2 660.0 575.0C659.5 555.8 659.6 529.2 659.5 520.0C656.2 520.0 643.2 520.0 640.0 520.0Z" fill="url(#c3leg)"/>
<path d="M515.8 153.0C515.8 149.1 516.6 146.2 517.5 144.0C518.4 141.8 519.2 141.1 521.0 140.0C522.8 138.9 517.9 138.1 528.0 137.3C538.1 136.6 572.8 135.8 581.7 135.5C582.0 134.9 583.2 132.6 583.5 132.0C582.8 129.2 579.7 118.7 579.5 115.0C579.3 111.3 579.8 110.8 582.5 110.0C585.2 109.2 591.8 111.8 596.0 110.5C600.2 109.2 601.4 105.0 607.5 102.5C613.6 100.0 625.4 96.4 632.5 95.5C639.6 94.6 644.8 95.7 650.0 97.0C655.2 98.3 659.3 103.0 663.5 103.5C667.7 104.0 672.3 99.9 675.0 100.0C677.7 100.1 678.8 100.1 679.5 104.0C680.2 107.9 679.5 120.2 679.5 123.5C687.1 122.0 715.8 115.2 725.0 114.5C734.2 113.8 733.0 116.4 735.0 119.0C737.0 121.6 737.7 119.0 737.0 130.0C736.3 141.0 732.8 170.0 731.0 185.0C729.2 200.0 726.4 207.5 726.0 220.0C725.6 232.5 726.4 248.3 728.5 260.0C730.6 271.7 736.6 281.7 738.5 290.0C740.4 298.3 740.6 300.0 740.0 310.0C739.4 320.0 735.8 343.3 735.0 350.0C720.8 355.0 664.2 375.0 650.0 380.0C634.3 382.5 571.7 392.5 556.0 395.0C555.6 393.3 555.5 391.2 553.7 385.0C551.9 378.8 546.9 365.8 545.0 357.5C543.1 349.2 542.3 346.1 542.5 335.0C542.7 323.9 545.8 305.6 546.0 291.0C546.2 276.4 546.0 260.2 543.7 247.5C541.5 234.8 536.9 228.3 532.5 215.0C528.1 201.7 520.3 177.8 517.5 167.5C514.7 157.2 515.8 156.9 515.8 153.0Z" fill="url(#c3frame)"/>
<clipPath id="c3fclip"><path d="M515.8 153.0C515.8 149.1 516.6 146.2 517.5 144.0C518.4 141.8 519.2 141.1 521.0 140.0C522.8 138.9 517.9 138.1 528.0 137.3C538.1 136.6 572.8 135.8 581.7 135.5C582.0 134.9 583.2 132.6 583.5 132.0C582.8 129.2 579.7 118.7 579.5 115.0C579.3 111.3 579.8 110.8 582.5 110.0C585.2 109.2 591.8 111.8 596.0 110.5C600.2 109.2 601.4 105.0 607.5 102.5C613.6 100.0 625.4 96.4 632.5 95.5C639.6 94.6 644.8 95.7 650.0 97.0C655.2 98.3 659.3 103.0 663.5 103.5C667.7 104.0 672.3 99.9 675.0 100.0C677.7 100.1 678.8 100.1 679.5 104.0C680.2 107.9 679.5 120.2 679.5 123.5C687.1 122.0 715.8 115.2 725.0 114.5C734.2 113.8 733.0 116.4 735.0 119.0C737.0 121.6 737.7 119.0 737.0 130.0C736.3 141.0 732.8 170.0 731.0 185.0C729.2 200.0 726.4 207.5 726.0 220.0C725.6 232.5 726.4 248.3 728.5 260.0C730.6 271.7 736.6 281.7 738.5 290.0C740.4 298.3 740.6 300.0 740.0 310.0C739.4 320.0 735.8 343.3 735.0 350.0C720.8 355.0 664.2 375.0 650.0 380.0C634.3 382.5 571.7 392.5 556.0 395.0C555.6 393.3 555.5 391.2 553.7 385.0C551.9 378.8 546.9 365.8 545.0 357.5C543.1 349.2 542.3 346.1 542.5 335.0C542.7 323.9 545.8 305.6 546.0 291.0C546.2 276.4 546.0 260.2 543.7 247.5C541.5 234.8 536.9 228.3 532.5 215.0C528.1 201.7 520.3 177.8 517.5 167.5C514.7 157.2 515.8 156.9 515.8 153.0Z"/></clipPath>
<g clip-path="url(#c3fclip)"><path d="M515.8 153.0C515.8 149.1 516.6 146.2 517.5 144.0C518.4 141.8 519.2 141.1 521.0 140.0C522.8 138.9 517.9 138.1 528.0 137.3C538.1 136.6 572.8 135.8 581.7 135.5C582.0 134.9 583.2 132.6 583.5 132.0C582.8 129.2 579.7 118.7 579.5 115.0C579.3 111.3 579.8 110.8 582.5 110.0C585.2 109.2 591.8 111.8 596.0 110.5C600.2 109.2 601.4 105.0 607.5 102.5C613.6 100.0 625.4 96.4 632.5 95.5C639.6 94.6 644.8 95.7 650.0 97.0C655.2 98.3 659.3 103.0 663.5 103.5C667.7 104.0 672.3 99.9 675.0 100.0C677.7 100.1 678.8 100.1 679.5 104.0C680.2 107.9 679.5 120.2 679.5 123.5C687.1 122.0 715.8 115.2 725.0 114.5C734.2 113.8 733.0 116.4 735.0 119.0C737.0 121.6 737.7 119.0 737.0 130.0C736.3 141.0 732.8 170.0 731.0 185.0C729.2 200.0 726.4 207.5 726.0 220.0C725.6 232.5 726.4 248.3 728.5 260.0C730.6 271.7 736.6 281.7 738.5 290.0C740.4 298.3 740.6 300.0 740.0 310.0C739.4 320.0 735.8 343.3 735.0 350.0C720.8 355.0 664.2 375.0 650.0 380.0C634.3 382.5 571.7 392.5 556.0 395.0C555.6 393.3 555.5 391.2 553.7 385.0C551.9 378.8 546.9 365.8 545.0 357.5C543.1 349.2 542.3 346.1 542.5 335.0C542.7 323.9 545.8 305.6 546.0 291.0C546.2 276.4 546.0 260.2 543.7 247.5C541.5 234.8 536.9 228.3 532.5 215.0C528.1 201.7 520.3 177.8 517.5 167.5C514.7 157.2 515.8 156.9 515.8 153.0Z" fill="none" stroke="#ede1a1" stroke-width="4.500"/></g>
<path d="M515.8 153.0C515.8 149.1 516.6 146.2 517.5 144.0C518.4 141.8 519.2 141.1 521.0 140.0C522.8 138.9 517.9 138.1 528.0 137.3C538.1 136.6 572.8 135.8 581.7 135.5C582.0 134.9 583.2 132.6 583.5 132.0C582.8 129.2 579.7 118.7 579.5 115.0C579.3 111.3 581.4 110.5 582.5 110.0C583.6 109.5 585.8 111.0 586.0 112.0C586.2 113.0 583.7 112.3 584.0 116.0C584.3 119.7 588.2 130.1 588.0 134.0C587.8 137.9 583.8 138.6 583.0 139.5C574.2 139.7 539.8 139.8 530.0 140.5C520.2 141.2 525.9 141.9 524.5 144.0C523.1 146.1 521.8 149.0 521.5 153.0C521.2 157.0 520.4 158.0 523.0 168.0C525.6 178.0 532.8 199.8 537.0 213.0C541.2 226.2 545.8 234.0 548.0 247.0C550.2 260.0 550.2 276.3 550.0 291.0C549.8 305.7 547.2 324.0 547.0 335.0C546.8 346.0 547.3 348.8 549.0 357.0C550.7 365.2 555.7 379.5 557.0 384.0C556.5 384.2 554.2 384.8 553.7 385.0C552.2 380.4 546.9 365.8 545.0 357.5C543.1 349.2 542.3 346.1 542.5 335.0C542.7 323.9 545.8 305.6 546.0 291.0C546.2 276.4 546.0 260.2 543.7 247.5C541.5 234.8 536.9 228.3 532.5 215.0C528.1 201.7 520.3 177.8 517.5 167.5C514.7 157.2 515.8 156.9 515.8 153.0Z" fill="#f1e4a2"/>
<path d="M620.0 364.0C625.0 362.8 638.8 360.4 650.0 357.0C661.2 353.6 676.7 348.0 687.5 343.5C698.3 339.0 708.6 333.8 715.0 330.0C721.4 326.2 724.2 322.5 726.0 321.0C725.7 324.5 724.3 338.5 724.0 342.0C722.5 342.0 721.1 340.9 715.0 342.0C708.9 343.1 698.3 345.9 687.5 348.7C676.7 351.4 661.2 355.8 650.0 358.5C638.8 361.2 625.0 363.9 620.0 365.0C620.0 364.8 620.0 364.2 620.0 364.0Z" fill="#f5f5f5"/>
<path d="M563.7 362.5L585.0 361.0L596.0 371.0L570.0 379.0Z" fill="#f5f5f5"/>
<clipPath id="c3cushclip"><path d="M541.0 163.0C540.6 158.0 541.4 157.1 543.5 155.0C545.6 152.9 547.0 151.6 553.5 150.5C560.0 149.4 573.5 150.5 582.5 148.5C591.5 146.5 598.8 141.7 607.5 138.5C616.2 135.3 626.2 130.8 635.0 129.5C643.8 128.2 651.7 129.6 660.0 130.5C668.3 131.4 675.8 135.1 685.0 135.0C694.2 134.9 708.6 130.2 715.0 130.0C721.4 129.8 721.8 131.5 723.5 134.0C725.2 136.5 726.1 136.5 725.5 145.0C724.9 153.5 721.7 171.7 720.0 185.0C718.3 198.3 715.8 212.5 715.5 225.0C715.2 237.5 716.9 250.0 718.5 260.0C720.1 270.0 723.8 279.2 725.0 285.0C726.2 290.8 726.2 291.2 726.0 295.0C725.8 298.8 725.5 303.3 723.7 307.5C721.9 311.7 719.0 316.1 715.0 320.0C711.0 323.9 706.7 328.1 700.0 331.0C693.3 333.9 685.0 334.6 675.0 337.5C665.0 340.4 649.6 346.0 640.0 348.5C630.4 351.0 625.8 351.9 617.5 352.5C609.2 353.1 597.9 353.6 590.0 352.0C582.1 350.4 574.4 347.9 570.0 343.0C565.6 338.1 564.2 331.2 563.7 322.5C563.2 313.8 566.4 298.9 567.0 291.0C567.6 283.1 568.5 284.3 567.5 275.0C566.5 265.7 564.6 250.0 561.0 235.0C557.4 220.0 549.3 197.0 546.0 185.0C542.7 173.0 541.4 168.0 541.0 163.0Z"/></clipPath>
<path d="M541.0 163.0C540.6 158.0 541.4 157.1 543.5 155.0C545.6 152.9 547.0 151.6 553.5 150.5C560.0 149.4 573.5 150.5 582.5 148.5C591.5 146.5 598.8 141.7 607.5 138.5C616.2 135.3 626.2 130.8 635.0 129.5C643.8 128.2 651.7 129.6 660.0 130.5C668.3 131.4 675.8 135.1 685.0 135.0C694.2 134.9 708.6 130.2 715.0 130.0C721.4 129.8 721.8 131.5 723.5 134.0C725.2 136.5 726.1 136.5 725.5 145.0C724.9 153.5 721.7 171.7 720.0 185.0C718.3 198.3 715.8 212.5 715.5 225.0C715.2 237.5 716.9 250.0 718.5 260.0C720.1 270.0 723.8 279.2 725.0 285.0C726.2 290.8 726.2 291.2 726.0 295.0C725.8 298.8 725.5 303.3 723.7 307.5C721.9 311.7 719.0 316.1 715.0 320.0C711.0 323.9 706.7 328.1 700.0 331.0C693.3 333.9 685.0 334.6 675.0 337.5C665.0 340.4 649.6 346.0 640.0 348.5C630.4 351.0 625.8 351.9 617.5 352.5C609.2 353.1 597.9 353.6 590.0 352.0C582.1 350.4 574.4 347.9 570.0 343.0C565.6 338.1 564.2 331.2 563.7 322.5C563.2 313.8 566.4 298.9 567.0 291.0C567.6 283.1 568.5 284.3 567.5 275.0C566.5 265.7 564.6 250.0 561.0 235.0C557.4 220.0 549.3 197.0 546.0 185.0C542.7 173.0 541.4 168.0 541.0 163.0Z" fill="url(#c3back)"/>
<path d="M541.0 163.0C540.6 158.0 541.4 157.1 543.5 155.0C545.6 152.9 547.0 151.6 553.5 150.5C560.0 149.4 573.5 150.5 582.5 148.5C591.5 146.5 598.8 141.7 607.5 138.5C616.2 135.3 626.2 130.8 635.0 129.5C643.8 128.2 651.7 129.6 660.0 130.5C668.3 131.4 675.8 135.1 685.0 135.0C694.2 134.9 708.6 130.2 715.0 130.0C721.4 129.8 721.8 131.5 723.5 134.0C725.2 136.5 726.1 136.5 725.5 145.0C724.9 153.5 721.7 171.7 720.0 185.0C718.3 198.3 715.8 212.5 715.5 225.0C715.2 237.5 716.9 250.0 718.5 260.0C720.1 270.0 723.8 279.2 725.0 285.0C726.2 290.8 726.2 291.2 726.0 295.0C725.8 298.8 725.5 303.3 723.7 307.5C721.9 311.7 719.0 316.1 715.0 320.0C711.0 323.9 706.7 328.1 700.0 331.0C693.3 333.9 685.0 334.6 675.0 337.5C665.0 340.4 649.6 346.0 640.0 348.5C630.4 351.0 625.8 351.9 617.5 352.5C609.2 353.1 597.9 353.6 590.0 352.0C582.1 350.4 574.4 347.9 570.0 343.0C565.6 338.1 564.2 331.2 563.7 322.5C563.2 313.8 566.4 298.9 567.0 291.0C567.6 283.1 568.5 284.3 567.5 275.0C566.5 265.7 564.6 250.0 561.0 235.0C557.4 220.0 549.3 197.0 546.0 185.0C542.7 173.0 541.4 168.0 541.0 163.0Z" fill="url(#c3backtop)"/>
<path d="M541.0 163.0C540.6 158.0 541.4 157.1 543.5 155.0C545.6 152.9 547.0 151.6 553.5 150.5C560.0 149.4 573.5 150.5 582.5 148.5C591.5 146.5 598.8 141.7 607.5 138.5C616.2 135.3 626.2 130.8 635.0 129.5C643.8 128.2 651.7 129.6 660.0 130.5C668.3 131.4 675.8 135.1 685.0 135.0C694.2 134.9 708.6 130.2 715.0 130.0C721.4 129.8 721.8 131.5 723.5 134.0C725.2 136.5 726.1 136.5 725.5 145.0C724.9 153.5 721.7 171.7 720.0 185.0C718.3 198.3 715.8 212.5 715.5 225.0C715.2 237.5 716.9 250.0 718.5 260.0C720.1 270.0 723.8 279.2 725.0 285.0C726.2 290.8 726.2 291.2 726.0 295.0C725.8 298.8 725.5 303.3 723.7 307.5C721.9 311.7 719.0 316.1 715.0 320.0C711.0 323.9 706.7 328.1 700.0 331.0C693.3 333.9 685.0 334.6 675.0 337.5C665.0 340.4 649.6 346.0 640.0 348.5C630.4 351.0 625.8 351.9 617.5 352.5C609.2 353.1 597.9 353.6 590.0 352.0C582.1 350.4 574.4 347.9 570.0 343.0C565.6 338.1 564.2 331.2 563.7 322.5C563.2 313.8 566.4 298.9 567.0 291.0C567.6 283.1 568.5 284.3 567.5 275.0C566.5 265.7 564.6 250.0 561.0 235.0C557.4 220.0 549.3 197.0 546.0 185.0C542.7 173.0 541.4 168.0 541.0 163.0Z" fill="url(#c3backtr)"/>
<g clip-path="url(#c3cushclip)"><path d="M725.5 140.0C725.5 141.7 726.4 142.5 725.5 150.0C724.6 157.5 721.7 172.5 720.0 185.0C718.3 197.5 715.8 212.5 715.5 225.0C715.2 237.5 716.9 250.0 718.5 260.0C720.1 270.0 723.8 279.2 725.0 285.0C726.2 290.8 726.2 291.2 726.0 295.0C725.8 298.8 725.5 303.3 723.7 307.5C721.9 311.7 719.0 316.1 715.0 320.0C711.0 323.9 706.7 328.1 700.0 331.0C693.3 333.9 685.0 334.6 675.0 337.5C665.0 340.4 645.8 346.7 640.0 348.5" fill="none" stroke="#6c130f" stroke-width="5" filter="url(#c3blur2)" opacity="0.8"/></g>
<path d="M561.0 420.0C561.2 421.0 559.8 421.8 562.5 426.0C565.2 430.2 570.4 435.2 577.5 445.0C584.6 454.8 597.1 473.3 605.0 485.0C612.9 496.7 620.0 508.8 625.0 515.0C630.0 521.2 630.0 520.9 635.0 522.5C640.0 524.1 644.2 525.8 655.0 524.5C665.8 523.2 689.2 517.9 700.0 515.0C710.8 512.1 708.3 511.6 720.0 507.0C731.7 502.4 752.3 495.2 770.0 487.5C787.7 479.8 816.7 465.4 826.0 461.0C826.5 459.2 828.5 451.8 829.0 450.0C807.5 448.3 721.5 441.7 700.0 440.0C683.3 436.7 616.7 423.3 600.0 420.0C593.5 420.0 567.5 420.0 561.0 420.0Z" fill="url(#c3rail)"/>
<clipPath id="c3seatclip"><path d="M553.7 391.0C556.4 389.0 559.0 383.4 570.0 379.0C581.0 374.6 595.8 370.7 620.0 364.5C644.2 358.3 695.8 345.2 715.0 342.0C734.2 338.8 721.2 336.2 735.0 345.0C748.8 353.8 783.3 384.2 797.5 395.0C811.7 405.8 814.4 406.2 820.0 410.0C825.6 413.8 828.6 414.8 831.0 417.5C833.4 420.2 834.5 421.8 834.5 426.0C834.5 430.2 832.6 437.7 831.0 442.5C829.4 447.3 835.2 448.8 825.0 455.0C814.8 461.2 787.5 472.5 770.0 480.0C752.5 487.5 738.3 494.0 720.0 500.0C701.7 506.0 673.3 513.3 660.0 516.0C646.7 518.7 645.4 517.0 640.0 516.0C634.6 515.0 632.9 515.6 627.5 510.0C622.1 504.4 615.0 492.9 607.5 482.5C600.0 472.1 590.0 457.8 582.5 447.5C575.0 437.2 566.5 427.2 562.5 421.0C558.5 414.8 560.2 415.0 558.7 410.0C557.2 405.0 554.5 394.2 553.7 391.0Z"/></clipPath>
<path d="M553.7 391.0C556.4 389.0 559.0 383.4 570.0 379.0C581.0 374.6 595.8 370.7 620.0 364.5C644.2 358.3 695.8 345.2 715.0 342.0C734.2 338.8 721.2 336.2 735.0 345.0C748.8 353.8 783.3 384.2 797.5 395.0C811.7 405.8 814.4 406.2 820.0 410.0C825.6 413.8 828.6 414.8 831.0 417.5C833.4 420.2 834.5 421.8 834.5 426.0C834.5 430.2 832.6 437.7 831.0 442.5C829.4 447.3 835.2 448.8 825.0 455.0C814.8 461.2 787.5 472.5 770.0 480.0C752.5 487.5 738.3 494.0 720.0 500.0C701.7 506.0 673.3 513.3 660.0 516.0C646.7 518.7 645.4 517.0 640.0 516.0C634.6 515.0 632.9 515.6 627.5 510.0C622.1 504.4 615.0 492.9 607.5 482.5C600.0 472.1 590.0 457.8 582.5 447.5C575.0 437.2 566.5 427.2 562.5 421.0C558.5 414.8 560.2 415.0 558.7 410.0C557.2 405.0 554.5 394.2 553.7 391.0Z" fill="#971f17"/>
<g clip-path="url(#c3seatclip)"><path d="M612.0 358.0C622.0 351.1 697.9 338.4 715.0 336.0C732.1 333.6 728.7 332.8 740.0 340.0C751.3 347.2 788.7 381.3 800.0 390.0C811.3 398.7 819.7 401.0 825.0 405.0C830.3 409.0 840.4 418.7 840.0 420.0C839.6 421.3 832.8 415.4 822.0 415.0C811.2 414.6 776.6 416.6 759.0 417.0C741.4 417.4 702.5 418.9 690.0 418.0C677.5 417.1 671.7 414.0 665.0 410.0C658.3 406.0 647.1 394.9 640.0 388.0C632.9 381.1 602.0 364.9 612.0 358.0Z" fill="#861a14" filter="url(#c3blur4)"/>
<path d="M640.0 352.0C648.0 347.2 701.7 337.6 715.0 336.0C728.3 334.4 728.7 332.8 740.0 340.0C751.3 347.2 788.7 381.3 800.0 390.0C811.3 398.7 820.3 402.1 825.0 405.0C829.7 407.9 841.0 411.6 835.0 412.0C829.0 412.4 795.3 409.1 780.0 408.0C764.7 406.9 733.3 406.1 720.0 404.0C706.7 401.9 688.7 396.3 680.0 392.0C671.3 387.7 660.3 377.3 655.0 372.0C649.7 366.7 632.0 356.8 640.0 352.0Z" fill="#7b1611" filter="url(#c3blur4)"/>
<path d="M553.7 391.0C554.5 394.2 557.2 405.0 558.7 410.0C560.2 415.0 558.5 414.8 562.5 421.0C566.5 427.2 575.0 437.2 582.5 447.5C590.0 457.8 600.0 472.1 607.5 482.5C615.0 492.9 622.1 504.4 627.5 510.0C632.9 515.6 634.6 515.0 640.0 516.0C645.4 517.0 646.7 518.7 660.0 516.0C673.3 513.3 701.7 506.0 720.0 500.0C738.3 494.0 752.5 487.5 770.0 480.0C787.5 472.5 815.8 459.2 825.0 455.0" fill="none" stroke="#9e2218" stroke-width="14" filter="url(#c3blur2)" opacity="0.7"/></g>
<path d="M727.0 321.0L740.0 310.0L735.0 345.0L723.7 347.5Z" fill="#dfd498"/>
<path d="M545.0 357.5L550.0 352.0L563.7 362.5L571.0 386.8L554.5 391.8Z" fill="#dfd498"/>
<path d="M545.0 357.5L549.0 358.0L558.0 390.5L554.5 391.8Z" fill="#f1e4a2"/>
<path d="M553.0 304.0C553.3 302.8 554.8 299.6 555.5 299.0C556.2 298.4 557.9 296.4 560.0 298.0C562.1 299.6 575.3 312.9 577.0 314.5C575.9 315.6 567.1 324.4 566.0 325.5C564.6 324.1 553.8 313.1 552.5 311.0C551.2 308.9 552.7 305.2 553.0 304.0Z" fill="#e6da9c"/>
<path d="M557 303.500L570.500 318" stroke="#f7ebad" stroke-width="4.500" stroke-linecap="round"/>
<path d="M567.0 323.0C568.0 320.9 571.3 319.4 573.0 318.5C574.7 317.6 579.1 316.8 580.0 316.5C582.5 319.0 594.0 330.1 599.0 335.0C604.0 339.9 615.0 351.0 617.5 353.5C617.7 354.4 618.8 359.1 619.0 360.0C616.9 361.4 605.1 369.1 603.0 370.5C600.6 368.7 589.5 360.5 585.0 357.0C580.5 353.5 572.1 347.6 569.5 344.5C566.9 341.4 565.8 336.9 565.5 334.0C565.2 331.1 566.0 325.1 567.0 323.0Z" fill="#961f17"/>
<path d="M572.0 321.0L580.0 316.5L617.5 353.5L618.5 359.0L610.0 361.0Z" fill="#861a14"/>
<path d="M603.7 367.5C605.6 366.6 613.1 362.9 615.0 362.0C618.5 365.4 632.0 377.4 636.0 382.5C640.0 387.6 638.9 387.9 638.7 392.5C638.5 397.1 635.2 402.9 635.0 410.0C634.8 417.1 637.1 426.7 637.5 435.0C637.9 443.3 638.3 454.0 637.5 460.0C636.7 466.0 633.3 469.2 632.5 471.0C630.8 470.4 624.2 468.1 622.5 467.5C621.2 465.8 616.2 459.2 615.0 457.5C615.6 455.8 617.5 451.2 618.7 447.5C620.0 443.8 622.7 440.4 622.5 435.0C622.3 429.6 618.8 421.2 617.5 415.0C616.2 408.8 615.0 402.5 615.0 397.5C615.0 392.5 619.4 389.4 617.5 385.0C615.6 380.6 606.0 373.3 603.7 371.0C603.7 370.4 603.7 368.1 603.7 367.5Z" fill="#dfd498"/>
<clipPath id="c3supLc"><path d="M603.7 367.5C605.6 366.6 613.1 362.9 615.0 362.0C618.5 365.4 632.0 377.4 636.0 382.5C640.0 387.6 638.9 387.9 638.7 392.5C638.5 397.1 635.2 402.9 635.0 410.0C634.8 417.1 637.1 426.7 637.5 435.0C637.9 443.3 638.3 454.0 637.5 460.0C636.7 466.0 633.3 469.2 632.5 471.0C630.8 470.4 624.2 468.1 622.5 467.5C621.2 465.8 616.2 459.2 615.0 457.5C615.6 455.8 617.5 451.2 618.7 447.5C620.0 443.8 622.7 440.4 622.5 435.0C622.3 429.6 618.8 421.2 617.5 415.0C616.2 408.8 615.0 402.5 615.0 397.5C615.0 392.5 619.4 389.4 617.5 385.0C615.6 380.6 606.0 373.3 603.7 371.0C603.7 370.4 603.7 368.1 603.7 367.5Z"/></clipPath><g clip-path="url(#c3supLc)"><path d="M607.0 366.0C608.3 365.3 613.7 362.7 615.0 362.0C618.8 365.4 633.3 377.4 637.5 382.5C641.7 387.6 640.2 387.9 640.0 392.5C639.8 397.1 636.7 402.9 636.5 410.0C636.3 417.1 638.6 426.7 639.0 435.0C639.4 443.3 639.8 453.8 639.0 460.0C638.2 466.2 634.8 470.0 634.0 472.0C632.7 469.7 627.2 464.2 626.0 458.0C624.8 451.8 627.5 442.7 627.0 435.0C626.5 427.3 623.3 418.8 623.0 412.0C622.7 405.2 625.2 398.5 625.0 394.0C624.8 389.5 625.0 389.7 622.0 385.0C619.0 380.3 609.5 369.2 607.0 366.0Z" fill="#f4e8aa" filter="url(#c3blur1)"/></g>
<path d="M728.7 261.0L753.7 276.0L747.5 293.7L725.0 272.5Z" fill="#e6da9c"/>
<path d="M729 267L750 284" stroke="#f7ebad" stroke-width="5" stroke-linecap="butt"/>
<path d="M749.0 280.0C750.1 278.9 753.1 278.7 755.0 278.5C756.9 278.3 761.9 278.7 763.0 278.7C765.7 280.7 777.6 289.5 783.0 293.5C788.4 297.5 800.9 306.7 803.7 308.7C803.8 309.5 804.4 313.7 804.5 314.5C802.6 316.0 791.9 324.5 790.0 326.0C787.1 324.0 773.7 315.0 768.0 311.0C762.3 307.0 750.2 298.0 747.5 296.0C747.4 294.8 746.8 289.1 747.0 287.0C747.2 284.9 747.9 281.1 749.0 280.0Z" fill="#9b2118"/>
<path d="M750.0 280.5L755.0 278.5L763.0 278.7L803.7 308.7L804.2 312.0L797.0 313.5L757.0 284.5Z" fill="#871a14"/>
<path d="M804.5 314.5L804.2 311.0L797.0 313.5L790.0 326.0Z" fill="#a3241a"/>
<path d="M791.0 318.7C793.1 318.0 801.6 315.2 803.7 314.5C806.8 316.2 818.3 321.8 822.5 325.0C826.7 328.2 827.9 330.8 828.7 333.7C829.5 336.6 829.0 338.5 827.5 342.5C826.0 346.5 820.8 350.4 820.0 357.5C819.2 364.6 822.9 376.2 822.5 385.0C822.1 393.8 818.3 405.8 817.5 410.0C816.4 410.5 812.1 412.5 811.0 413.0C808.1 411.6 796.6 405.9 793.7 404.5C795.2 402.5 800.6 396.6 802.5 392.5C804.4 388.4 805.2 386.2 805.0 380.0C804.8 373.8 800.2 361.7 801.0 355.0C801.8 348.3 808.9 343.6 810.0 340.0C811.1 336.4 810.2 336.1 807.5 333.7C804.8 331.3 796.0 326.9 793.7 325.5C793.2 324.4 791.5 319.8 791.0 318.7Z" fill="#dfd498"/>
<clipPath id="c3supRc"><path d="M791.0 318.7C793.1 318.0 801.6 315.2 803.7 314.5C806.8 316.2 818.3 321.8 822.5 325.0C826.7 328.2 827.9 330.8 828.7 333.7C829.5 336.6 829.0 338.5 827.5 342.5C826.0 346.5 820.8 350.4 820.0 357.5C819.2 364.6 822.9 376.2 822.5 385.0C822.1 393.8 818.3 405.8 817.5 410.0C816.4 410.5 812.1 412.5 811.0 413.0C808.1 411.6 796.6 405.9 793.7 404.5C795.2 402.5 800.6 396.6 802.5 392.5C804.4 388.4 805.2 386.2 805.0 380.0C804.8 373.8 800.2 361.7 801.0 355.0C801.8 348.3 808.9 343.6 810.0 340.0C811.1 336.4 810.2 336.1 807.5 333.7C804.8 331.3 796.0 326.9 793.7 325.5C793.2 324.4 791.5 319.8 791.0 318.7Z"/></clipPath><g clip-path="url(#c3supRc)"><path d="M795.0 317.5C796.5 317.0 802.2 315.0 803.7 314.5C807.1 316.2 819.6 321.8 824.0 325.0C828.4 328.2 829.2 330.8 830.0 333.7C830.8 336.6 830.4 338.5 829.0 342.5C827.6 346.5 822.3 350.4 821.5 357.5C820.7 364.6 824.4 375.9 824.0 385.0C823.6 394.1 819.8 407.5 819.0 412.0C817.5 410.7 811.2 409.3 810.0 404.0C808.8 398.7 812.2 387.8 812.0 380.0C811.8 372.2 807.8 363.5 808.5 357.0C809.2 350.5 815.2 345.0 816.0 341.0C816.8 337.0 816.5 336.9 813.0 333.0C809.5 329.1 798.0 320.1 795.0 317.5Z" fill="#f4e8aa" filter="url(#c3blur1)"/></g>
</svg>

<svg style="left:0;top:0;pointer-events:none" width="989" height="827"><defs><pattern id="dv" x="397" y="87" width="2" height="6" patternUnits="userSpaceOnUse"><rect x="0" y="0" width="1" height="1" fill="#fff"/><rect x="1" y="1" width="1" height="1" fill="#8a8a90"/></pattern><pattern id="dh" x="8" y="380" width="6" height="2" patternUnits="userSpaceOnUse"><rect x="0" y="0" width="1" height="1" fill="#fff"/><rect x="1" y="1" width="1" height="1" fill="#8a8a90"/></pattern><pattern id="dh2" x="8" y="680" width="6" height="2" patternUnits="userSpaceOnUse"><rect x="0" y="0" width="1" height="1" fill="#fff"/><rect x="1" y="1" width="1" height="1" fill="#8a8a90"/></pattern></defs><rect x="397" y="87" width="2" height="590" fill="url(#dv)"/><rect x="8" y="380" width="388" height="2" fill="url(#dh)"/><rect x="8" y="680" width="973" height="2" fill="url(#dh2)"/></svg>
<div style="left:8px;top:702px;width:973px;height:117px;border:1px solid;border-color:#fff #9d9da1 #9d9da1 #fff;"></div>
<div class="tab" style="left:8px;width:166px">Selección</div>
<div class="tab" style="left:174px;width:139px">Edición</div>
<div class="tab" style="left:313px;top:684px;width:129px;height:19px;font-weight:bold;background:#e0dfe3;border-bottom:1px solid #e0dfe3;line-height:18px;font-size:8.8px;letter-spacing:0px;z-index:2">Modos</div>
<div class="tab" style="left:442px;width:156px">Cámaras</div>
<div class="tab" style="left:598px;width:124px">Luces</div>
<div class="tab" style="left:722px;width:95px">SLI</div>
<div class="tab" style="left:817px;width:164px">Cabecera</div>
<div style="left:14px;top:708px;width:160px;height:16px;border:1px solid;border-color:#fff #9d9da1 #9d9da1 #fff;"></div>
<div style="left:169px;top:711px;width:2px;height:11px;border-left:1px solid #9d9da1;border-right:1px solid #fff"></div>
<div style="left:18px;top:710px;width:38px;height:12px;background:#f5f5f5"></div>
<div class="num" style="left:60px;top:710px;line-height:13px">96</div>
<div class="num" style="left:98px;top:710px;line-height:13px">96</div>
<div class="num" style="left:136px;top:710px;line-height:13px">96</div>
<div class="t" style="left:185px;top:710px;line-height:13px">Color fondo</div>
<div style="left:14px;top:724px;width:160px;height:16px;border:1px solid;border-color:#fff #9d9da1 #9d9da1 #fff;"></div>
<div style="left:169px;top:727px;width:2px;height:11px;border-left:1px solid #9d9da1;border-right:1px solid #fff"></div>
<div style="left:18px;top:726px;width:38px;height:12px;background:#5c5c5c"></div>
<div class="num" style="left:60px;top:726px;line-height:13px">36</div>
<div class="num" style="left:98px;top:726px;line-height:13px">36</div>
<div class="num" style="left:136px;top:726px;line-height:13px">36</div>
<div class="t" style="left:185px;top:726px;line-height:13px">Luz ambiente</div>
<div style="left:334px;top:708px;width:161px;height:16px;border:1px solid;border-color:#fff #9d9da1 #9d9da1 #fff;"></div>
<div style="left:490px;top:711px;width:2px;height:11px;border-left:1px solid #9d9da1;border-right:1px solid #fff"></div>
<div style="left:338px;top:710px;width:38px;height:12px;background:#404040"></div>
<div class="num" style="left:380px;top:710px;line-height:13px">25</div>
<div class="num" style="left:418px;top:710px;line-height:13px">25</div>
<div class="num" style="left:456px;top:710px;line-height:13px">25</div>
<div class="t" style="left:505px;top:710px;line-height:13px">Color ambiente</div>
<div style="left:334px;top:724px;width:161px;height:16px;border:1px solid;border-color:#fff #9d9da1 #9d9da1 #fff;"></div>
<div style="left:490px;top:727px;width:2px;height:11px;border-left:1px solid #9d9da1;border-right:1px solid #fff"></div>
<div style="left:338px;top:726px;width:38px;height:12px;background:#7d7d7d"></div>
<div class="num" style="left:380px;top:726px;line-height:13px">49</div>
<div class="num" style="left:418px;top:726px;line-height:13px">49</div>
<div class="num" style="left:456px;top:726px;line-height:13px">49</div>
<div class="t" style="left:505px;top:726px;line-height:13px">Luz difusa</div>
<div style="left:655px;top:708px;width:160px;height:16px;border:1px solid;border-color:#fff #9d9da1 #9d9da1 #fff;"></div>
<div style="left:810px;top:711px;width:2px;height:11px;border-left:1px solid #9d9da1;border-right:1px solid #fff"></div>
<div class="num" style="left:720px;top:710px;line-height:13px">20</div>
<div class="t" style="left:825px;top:710px;line-height:13px">Ángulo PV</div>
<div style="left:655px;top:724px;width:160px;height:16px;border:1px solid;border-color:#fff #9d9da1 #9d9da1 #fff;"></div>
<div style="left:810px;top:727px;width:2px;height:11px;border-left:1px solid #9d9da1;border-right:1px solid #fff"></div>
<div style="left:659px;top:726px;width:38px;height:12px;background:#000000"></div>
<div class="num" style="left:701px;top:726px;line-height:13px">0</div>
<div class="num" style="left:739px;top:726px;line-height:13px">0</div>
<div class="num" style="left:777px;top:726px;line-height:13px">0</div>
<div class="t" style="left:825px;top:726px;line-height:13px">Luz especular</div>
<div class="btn on" style="left:14px;top:762px;width:120px">FP multisample</div>
<div class="btn" style="left:134px;top:762px;width:119px">FP: 0</div>
<div class="btn" style="left:253px;top:762px;width:120px">OpenGL info PFs</div>
<div class="btn" style="left:373px;top:762px;width:120px">OpenGL info EXT</div>
<div class="btn on" style="left:14px;top:779px;width:120px">Con pivote</div>
<div class="btn on" style="left:134px;top:779px;width:119px">Con perspectiva</div>
<div class="btn" style="left:253px;top:779px;width:120px"></div>
<div class="btn" style="left:373px;top:779px;width:120px"></div>
<div class="btn" style="left:14px;top:796px;width:120px"></div>
<div class="btn" style="left:134px;top:796px;width:119px">Oculta traseras</div>
<div class="btn on" style="left:253px;top:796px;width:120px">Rellena delanteras</div>
<div class="btn on" style="left:373px;top:796px;width:120px">Rellena traseras</div>
<div class="btn" style="left:497px;top:762px;width:119px">Con compilado</div>
<div class="btn" style="left:616px;top:762px;width:120px">Con suavizado</div>
<div class="btn" style="left:736px;top:762px;width:119px">Con múltiple</div>
<div class="btn" style="left:855px;top:762px;width:120px">Con sombras</div>
<div class="btn" style="left:497px;top:779px;width:119px">Dibuja marco</div>
<div class="btn" style="left:616px;top:779px;width:120px">Dibuja ejes</div>
<div class="btn" style="left:736px;top:779px;width:119px">Dibuja pivote</div>
<div class="btn" style="left:855px;top:779px;width:120px">Dibuja cámara</div>
<div class="btn" style="left:497px;top:796px;width:119px"></div>
<div class="btn" style="left:616px;top:796px;width:120px"></div>
<div class="btn on" style="left:736px;top:796px;width:119px">Con iluminación</div>
<div class="btn on" style="left:855px;top:796px;width:120px">Con texturas</div>

</div>
</body></html>
